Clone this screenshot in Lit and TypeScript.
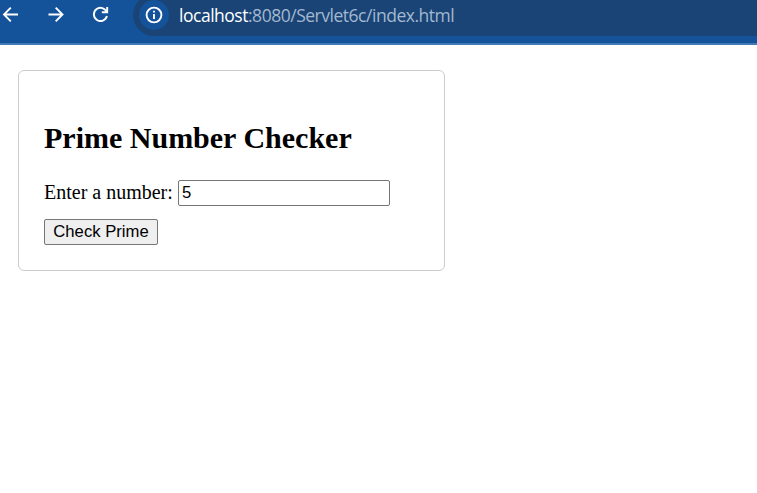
import { LitElement, html, css } from "lit";
import { customElement } from "lit/decorators.js";

@customElement("browser-toolbar")
class BrowserToolbar extends LitElement {
  static styles = css`
    :host {
      display: flex;
      box-sizing: border-box;
      height: 45px;
      background: #14539a;
      border-bottom: 2px solid #4279b7;
      overflow: hidden;
    }
    .nav {
      display: flex;
      flex: none;
      width: 133px;
      height: 30px;
    }
    .nav svg {
      display: block;
      flex: none;
      width: 44.5px;
      height: 30px;
    }
    .icon {
      fill: none;
      stroke: #fff;
      stroke-width: 1.9;
    }
    .address {
      display: flex;
      flex: 1;
      align-items: center;
      box-sizing: border-box;
      height: 42px;
      margin-top: -6px;
      padding-left: 6px;
      border-radius: 21px 0 0 21px;
      background: #194475;
    }
    .info {
      display: block;
      flex: none;
      width: 30px;
      height: 30px;
      border-radius: 50%;
      background: #14539a;
    }
    .url {
      margin-left: 10px;
      font: 17.5px/24px "Open Sans", "Noto Sans", sans-serif;
      letter-spacing: -0.48px;
      color: #a3b8d1;
      white-space: nowrap;
    }
    .host {
      color: #fff;
    }
  `;

  render() {
    return html`
      <div class="nav">
        <svg class="icon" viewBox="0 0 44.5 30">
          <path d="M18 14.5H4M10.8 7.6L4 14.5l6.8 6.9" />
        </svg>
        <svg class="icon" viewBox="44.5 0 44.5 30">
          <path d="M48 14.5H62M55.2 7.6l6.8 6.9l-6.8 6.9" />
        </svg>
        <svg class="icon" viewBox="89 0 44.5 30">
          <path d="M106.7 12.2A6.6 6.6 0 1 0 106.9 16M107.2 7v5.3h-5.4" />
        </svg>
      </div>
      <div class="address">
        <svg class="info icon" viewBox="0 0 30 30">
          <circle cx="15" cy="15" r="7.4" />
          <path d="M15 14v5M15 10.7v1.8" />
        </svg>
        <div class="url"><span class="host">localhost</span>:8080/Servlet6c/index.html</div>
      </div>
    `;
  }
}

@customElement("app-root")
class AppRoot extends LitElement {
  static styles = css`
    :host {
      display: block;
      height: 493px;
      overflow: hidden;
      background: #fff;
      color: #000;
      font: 20px/23px "Liberation Serif", "Times New Roman", serif;
    }
    .card {
      box-sizing: border-box;
      width: 427px;
      height: 201px;
      margin: 25px 0 0 18px;
      padding: 50px 25px 25px;
      border: 1px solid #ccc;
      border-radius: 6px;
    }
    .title {
      margin: 0;
      font-size: 30px;
      line-height: 34px;
      font-weight: 700;
    }
    .row {
      display: flex;
      align-items: center;
      height: 26px;
      margin: 25px 0 13px;
    }
    .label {
      flex: none;
      width: 134px;
      padding-bottom: 2px;
    }
    .field,
    .button {
      box-sizing: border-box;
      height: 26px;
      margin: 0;
      border: 1px solid #767676;
      border-radius: 2px;
      font: 16.67px/19px "Liberation Sans", Arial, sans-serif;
      color: #000;
    }
    .field {
      width: 212px;
      padding: 1px 3px;
      background: #fff;
      outline: none;
    }
    .button {
      display: block;
      width: 114px;
      padding: 0 0 2px;
      background: #efefef;
      white-space: nowrap;
    }
  `;

  render() {
    return html`
      <browser-toolbar></browser-toolbar>
      <form class="card" @submit=${(e: Event) => e.preventDefault()}>
        <h2 class="title">Prime Number Checker</h2>
        <div class="row">
          <label class="label" for="number">Enter a number:</label>
          <input class="field" id="number" type="text" value="5" />
        </div>
        <button class="button" type="submit">Check Prime</button>
      </form>
    `;
  }
}
